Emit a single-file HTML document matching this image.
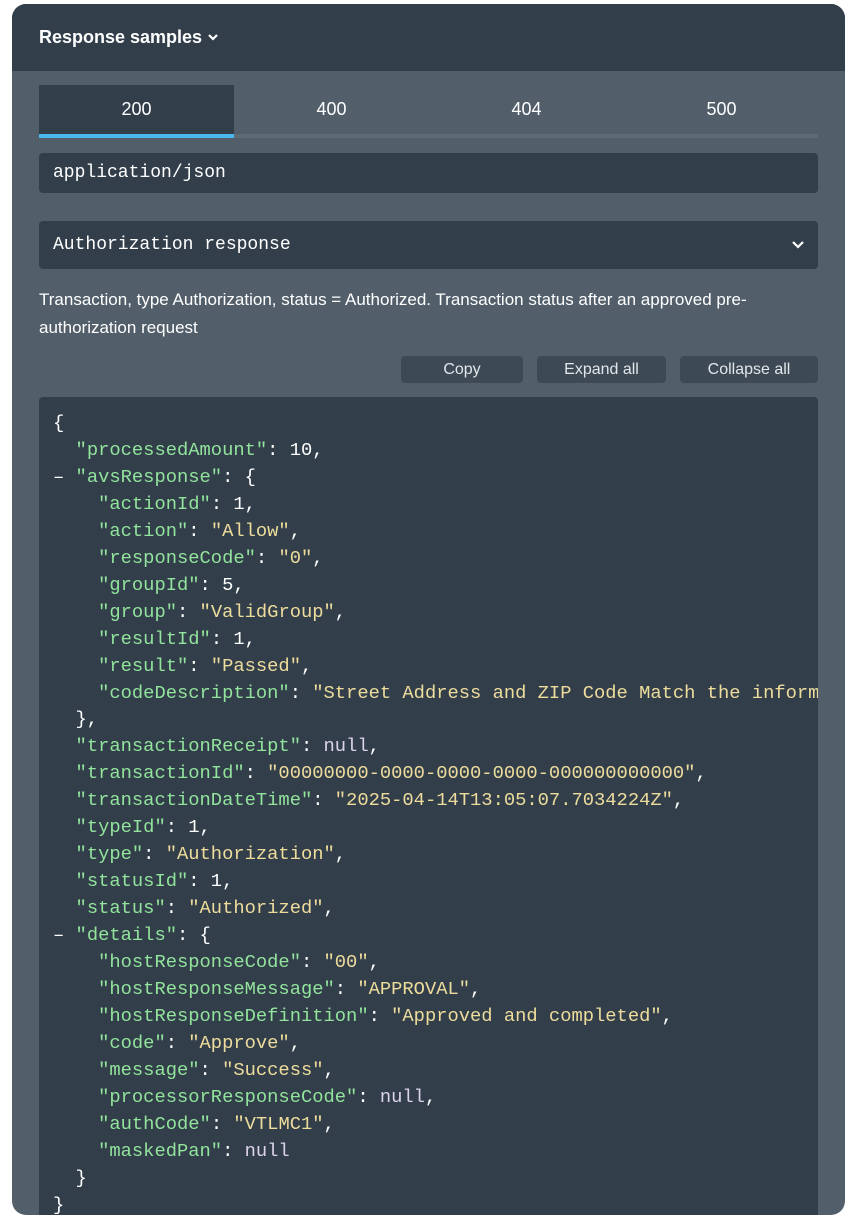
<!DOCTYPE html>
<html><head><meta charset="utf-8"><style>
*{margin:0;padding:0;box-sizing:border-box}
body{width:854px;height:1217px;background:#fff;overflow:hidden;font-family:"Liberation Sans",sans-serif;position:relative}
.panel{position:absolute;left:12px;top:4px;width:833px;height:1211px;background:#525f6b;border-radius:14px;overflow:hidden}
.hdr{height:67px;background:#323f4b;color:#fff;font-weight:bold;font-size:18px;padding:23px 0 0 27px}
.tabs{position:absolute;left:27px;top:81px;width:779px;height:53px;border-bottom:4px solid #5e6b77}
.tab{position:absolute;top:0;height:53px;width:195px;color:#fff;font-size:18px;text-align:center;line-height:48px}
.tab.on{background:#323f4b;border-bottom:4px solid #4db6f2;height:53px;line-height:48px}
.box{position:absolute;left:27px;width:779px;background:#323f4b;border-radius:4px;color:#fff;font-family:"Liberation Mono",monospace;font-size:18px;padding-left:14px}
.desc{position:absolute;left:27px;top:282px;color:#fff;font-size:17px;line-height:28px;width:760px}
.btn{position:absolute;top:352px;height:27px;background:#3d4a56;border-radius:4px;color:#e2e6ea;font-size:16px;text-align:center;line-height:27px}
.code{position:absolute;left:27px;top:393px;width:779px;height:830px;background:#323f4b;border-radius:4px;overflow:hidden;padding:13px 0 0 14px;font-family:"Liberation Mono",monospace;font-size:18.8px;line-height:26.95px;color:#fff;white-space:pre}
.k{color:#92e39c}.s{color:#eedc9c}.n{color:#dcd3ea}
</style></head><body>
<div class="panel">
<div class="hdr">Response samples <svg width="12" height="10" viewBox="0 0 12 10" style="vertical-align:1px"><path d="M2 3l4 4 4-4" stroke="#fff" stroke-width="2.2" fill="none"/></svg></div>
<div class="tabs">
<div class="tab on" style="left:0">200</div>
<div class="tab" style="left:195px">400</div>
<div class="tab" style="left:390px">404</div>
<div class="tab" style="left:585px">500</div>
</div>
<div class="box" style="top:149px;height:40px;line-height:40px">application/json</div>
<div class="box" style="top:217px;height:48px;line-height:48px">Authorization response<svg width="14" height="10" viewBox="0 0 14 10" style="position:absolute;right:13px;top:19px"><path d="M2 2l5 5 5-5" stroke="#fff" stroke-width="2.2" fill="none"/></svg></div>
<div class="desc">Transaction, type Authorization, status = Authorized. Transaction status after an approved pre-authorization request</div>
<div class="btn" style="left:389px;width:122px">Copy</div>
<div class="btn" style="left:525px;width:129px">Expand all</div>
<div class="btn" style="left:668px;width:138px">Collapse all</div>
<div class="code">{
  <span class="k">"processedAmount"</span>: 10,
– <span class="k">"avsResponse"</span>: {
    <span class="k">"actionId"</span>: 1,
    <span class="k">"action"</span>: <span class="s">"Allow"</span>,
    <span class="k">"responseCode"</span>: <span class="s">"0"</span>,
    <span class="k">"groupId"</span>: 5,
    <span class="k">"group"</span>: <span class="s">"ValidGroup"</span>,
    <span class="k">"resultId"</span>: 1,
    <span class="k">"result"</span>: <span class="s">"Passed"</span>,
    <span class="k">"codeDescription"</span>: <span class="s">"Street Address and ZIP Code Match the information on file"</span>
  },
  <span class="k">"transactionReceipt"</span>: <span class="n">null</span>,
  <span class="k">"transactionId"</span>: <span class="s">"00000000-0000-0000-0000-000000000000"</span>,
  <span class="k">"transactionDateTime"</span>: <span class="s">"2025-04-14T13:05:07.7034224Z"</span>,
  <span class="k">"typeId"</span>: 1,
  <span class="k">"type"</span>: <span class="s">"Authorization"</span>,
  <span class="k">"statusId"</span>: 1,
  <span class="k">"status"</span>: <span class="s">"Authorized"</span>,
– <span class="k">"details"</span>: {
    <span class="k">"hostResponseCode"</span>: <span class="s">"00"</span>,
    <span class="k">"hostResponseMessage"</span>: <span class="s">"APPROVAL"</span>,
    <span class="k">"hostResponseDefinition"</span>: <span class="s">"Approved and completed"</span>,
    <span class="k">"code"</span>: <span class="s">"Approve"</span>,
    <span class="k">"message"</span>: <span class="s">"Success"</span>,
    <span class="k">"processorResponseCode"</span>: <span class="n">null</span>,
    <span class="k">"authCode"</span>: <span class="s">"VTLMC1"</span>,
    <span class="k">"maskedPan"</span>: <span class="n">null</span>
  }
}</div>
</div>
</body></html>
